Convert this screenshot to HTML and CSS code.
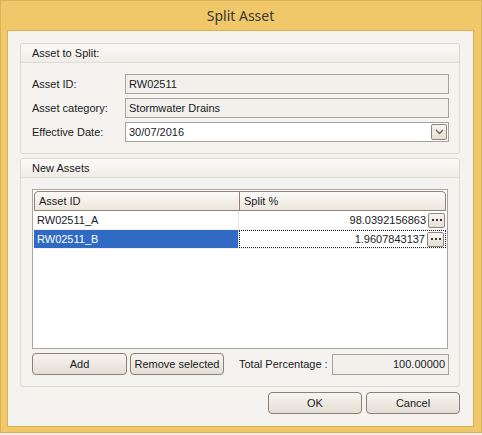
FILE: index.html
```html
<!DOCTYPE html>
<html lang="en">
<head>
  <meta charset="UTF-8" />
  <title>Split Asset</title>
  <link rel="stylesheet" href="styles.css">
</head>
<body>
  <div class="window">
    <div class="titlebar">Split Asset</div>
    <div class="client">

      <div class="group group-split">
        <div class="group-head">Asset to Split:</div>
        <div class="group-body form">
          <div class="row">
            <label>Asset ID:</label>
            <div class="field readonly">RW02511</div>
          </div>
          <div class="row">
            <label>Asset category:</label>
            <div class="field readonly">Stormwater Drains</div>
          </div>
          <div class="row">
            <label>Effective Date:</label>
            <div class="field date">
              <span>30/07/2016</span>
              <span class="drop">
                <svg width="9" height="6" viewBox="0 0 9 6"><path d="M1 1 L4.5 4.5 L8 1" fill="none" stroke="#6b5f55" stroke-width="1.3"/></svg>
              </span>
            </div>
          </div>
        </div>
      </div>

      <div class="group group-new">
        <div class="group-head">New Assets</div>
        <div class="group-body">
          <div class="grid">
            <div class="grid-head">
              <div class="col-id">Asset ID</div>
              <div class="col-split">Split %</div>
            </div>
            <div class="grid-row">
              <div class="col-id">RW02511_A</div>
              <div class="col-split">
                <span>98.0392156863</span>
                <span class="dots"><svg width="10" height="2" viewBox="0 0 10 2"><rect x="0" y="0" width="2" height="2" fill="#3a3530"/><rect x="4" y="0" width="2" height="2" fill="#3a3530"/><rect x="8" y="0" width="2" height="2" fill="#3a3530"/></svg></span>
              </div>
            </div>
            <div class="grid-row selected">
              <div class="col-id">RW02511_B</div>
              <div class="col-split focus">
                <span>1.9607843137</span>
                <span class="dots"><svg width="10" height="2" viewBox="0 0 10 2"><rect x="0" y="0" width="2" height="2" fill="#3a3530"/><rect x="4" y="0" width="2" height="2" fill="#3a3530"/><rect x="8" y="0" width="2" height="2" fill="#3a3530"/></svg></span>
              </div>
            </div>
          </div>
          <div class="grid-actions">
            <button class="btn btn-add">Add</button>
            <button class="btn btn-remove">Remove selected</button>
            <span class="total-label">Total Percentage :</span>
            <div class="field readonly total">100.00000</div>
          </div>
        </div>
      </div>

      <div class="footer">
        <button class="btn">OK</button>
        <button class="btn">Cancel</button>
      </div>

    </div>
  </div>
</body>
</html>
```

FILE: styles.css
```css
* {
  box-sizing: border-box;
}
body {
  margin: 0;
  background-color: #eeeeee;
  font-family: "Liberation Sans", Arial, sans-serif;
  font-size: 11px;
  color: #1a1a24;
}
.window {
  width: 482px;
  height: 433px;
  background-color: #f0c86a;
  border: 1px solid #d9b25a;
  padding: 0 7px 5px 6px;
  display: flex;
  flex-direction: column;
}
.titlebar {
  height: 29px;
  line-height: 29px;
  text-align: center;
  font-family: "Noto Sans", sans-serif;
  font-size: 14px;
  color: #3a3630;
}
.client {
  flex: 1;
  background-color: #f4f3ef;
  border: 1px solid #d7b051;
  padding: 12px 13px 0 12px;
  display: flex;
  flex-direction: column;
}
.group {
  border: 1px solid #ddd8cf;
  border-radius: 3px;
  background-color: #f4f3ef;
}
.group-split {
  height: 111px;
}
.group-new {
  height: 229px;
  margin-top: 4px;
}
.group-head {
  height: 19px;
  line-height: 18px;
  padding-left: 11px;
  border-bottom: 1px solid #e1dcd2;
  background: linear-gradient(#fbfaf8, #efede7);
  border-radius: 3px 3px 0 0;
}
.group-body {
  padding: 11px 10px 0 11px;
}
.form {
  display: flex;
  flex-direction: column;
  gap: 4px;
}
.row {
  display: flex;
  align-items: center;
}
.row label {
  width: 93px;
}
.field {
  flex: 1;
  height: 20px;
  line-height: 18px;
  border: 1px solid #aaa298;
  padding: 0 3px;
  background-color: #fff;
}
.field.readonly {
  background-color: #f1f0ec;
}
.field.date {
  display: flex;
  align-items: center;
  justify-content: space-between;
  padding-right: 1px;
}
.drop {
  width: 16px;
  height: 16px;
  border: 1px solid #8d8379;
  border-radius: 2px;
  background: linear-gradient(#f7f5f1, #e4dfd6);
  display: flex;
  align-items: center;
  justify-content: center;
}
.grid {
  height: 160px;
  border: 1px solid #aaa59c;
  background-color: #fff;
  padding: 1px;
  width: 416px;
}
.grid-head {
  display: flex;
  height: 20px;
  line-height: 18px;
  border: 1px solid #8f8174;
  border-radius: 4px 4px 0 0;
  background: linear-gradient(#fbfaf7, #ece7dd);
}
.grid-head .col-id {
  border-right: 1px solid #8f8174;
  padding-left: 4px;
}
.grid-head .col-split {
  padding-left: 4px;
}
.col-id {
  width: 205px;
}
.col-split {
  flex: 1;
}
.grid-row {
  display: flex;
  height: 19px;
  line-height: 19px;
  border-bottom: 1px solid #f0f0f0;
}
.grid-row .col-id {
  padding-left: 3px;
  border-right: 1px solid #e4e4e4;
}
.grid-row .col-split {
  display: flex;
  align-items: center;
  justify-content: flex-end;
  padding-right: 1px;
}
.grid-row.selected .col-id {
  background-color: #316ac5;
  color: #fff;
}
.col-split.focus {
  border: 1px dotted #222;
}
.dots {
  width: 17px;
  height: 15px;
  margin-left: 2px;
  border: 1px solid #8e8578;
  border-radius: 2px;
  background: linear-gradient(#f8f6f2, #e3ded5);
  display: flex;
  align-items: center;
  justify-content: center;
}
.grid-actions {
  display: flex;
  align-items: center;
  margin-top: 4px;
  height: 22px;
}
.btn {
  height: 22px;
  width: 94px;
  padding: 0;
  font-family: "Liberation Sans", Arial, sans-serif;
  font-size: 11px;
  color: #1a1a24;
  border: 1px solid #8c7f73;
  border-radius: 4px;
  background: linear-gradient(#f6f4f0, #e4dfd5);
}
.btn-add {
  width: 95px;
}
.btn-remove {
  margin-left: 3px;
}
.total-label {
  margin-left: 15px;
  width: 93px;
}
.field.total {
  height: 21px;
  text-align: right;
  padding-right: 3px;
}
.footer {
  display: flex;
  justify-content: flex-end;
  gap: 4px;
  margin-top: 5px;
}
```
